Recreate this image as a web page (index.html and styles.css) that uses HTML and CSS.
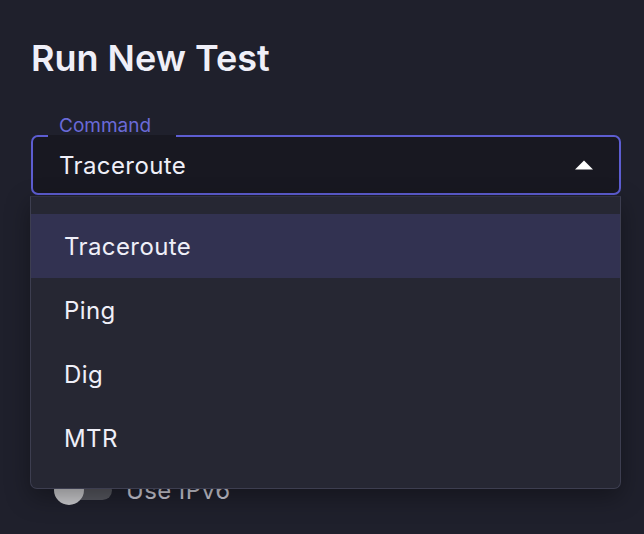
FILE: index.html
```html
<!DOCTYPE html>
<html lang="en">
<head>
    <meta charset="UTF-8">
    <meta name="viewport" content="width=device-width, initial-scale=1.0">
    <title>Run New Test</title>
    <link rel="stylesheet" href="styles.css">
</head>
<body>
    <div class="panel">
        <h1 class="title">Run New Test</h1>

        <div class="field">
            <div class="select">
                <span class="notch">Command</span>
                <span class="value">Traceroute</span>
                <svg class="arrow" width="18" height="10" viewBox="0 0 18 10">
                    <path d="M0 9.5 L9 0.5 L18 9.5 Z" fill="#ffffff"/>
                </svg>
            </div>

            <ul class="menu">
                <li class="option selected">Traceroute</li>
                <li class="option">Ping</li>
                <li class="option">Dig</li>
                <li class="option">MTR</li>
            </ul>
        </div>

        <div class="spacer"></div>

        <div class="switch-row">
            <span class="switch">
                <span class="track"></span>
                <span class="knob"></span>
            </span>
            <span class="switch-label">Use IPv6</span>
        </div>
    </div>
</body>
</html>
```

FILE: styles.css
```css
body {
    margin: 0;
    background-color: #1f202c;
    font-family: Inter, "Noto Sans", sans-serif;
    color: #efeff8;
    height: 534px;
    overflow: hidden;
}
.panel {
    padding: 36px 23px 0 31px;
}
.title {
    margin: 0;
    font-size: 36px;
    font-weight: 600;
    line-height: 44px;
}
.field {
    position: relative;
    margin-top: 55px;
}
.select {
    position: relative;
    display: flex;
    align-items: center;
    height: 56px;
    padding: 0 26px;
    border: 2px solid #5d5dd1;
    border-radius: 7px;
    background-color: #181821;
}
.notch {
    position: absolute;
    top: -22px;
    left: 15px;
    height: 22px;
    padding: 0 25px 0 11px;
    font-size: 19px;
    line-height: 22px;
    color: #6a6ad8;
    background: linear-gradient(to bottom, transparent 20px, #181821 20px);
}
.value {
    flex: 1;
    font-size: 24px;
    letter-spacing: 0.4px;
    color: #efeff8;
}
.arrow {
    display: block;
}
.menu {
    position: absolute;
    top: 61px;
    left: -1px;
    right: 0;
    margin: 0;
    padding: 17px 0 18px;
    list-style: none;
    background-color: #262733;
    border: 1px solid #3d3e50;
    border-top-color: #30313f;
    border-radius: 0 0 7px 7px;
    box-shadow: 0 8px 24px rgba(0, 0, 0, 0.35);
    z-index: 2;
}
.option {
    height: 64px;
    display: flex;
    align-items: center;
    padding-left: 33px;
    font-size: 24px;
    letter-spacing: 0.4px;
    color: #efeff8;
}
.option.selected {
    background-color: #323251;
}
.spacer {
    height: 280px;
}
.switch-row {
    display: flex;
    align-items: center;
    gap: 14px;
    margin-left: 23px;
}
.switch {
    position: relative;
    width: 58px;
    height: 30px;
}
.track {
    position: absolute;
    left: 4px;
    top: 6px;
    width: 54px;
    height: 19px;
    border-radius: 10px;
    background-color: #56575f;
}
.knob {
    position: absolute;
    left: 0;
    top: 0;
    width: 30px;
    height: 30px;
    border-radius: 50%;
    background-color: #c9c9cc;
}
.switch-label {
    font-size: 24px;
    letter-spacing: 0.4px;
    color: #c9c9d4;
}
```
